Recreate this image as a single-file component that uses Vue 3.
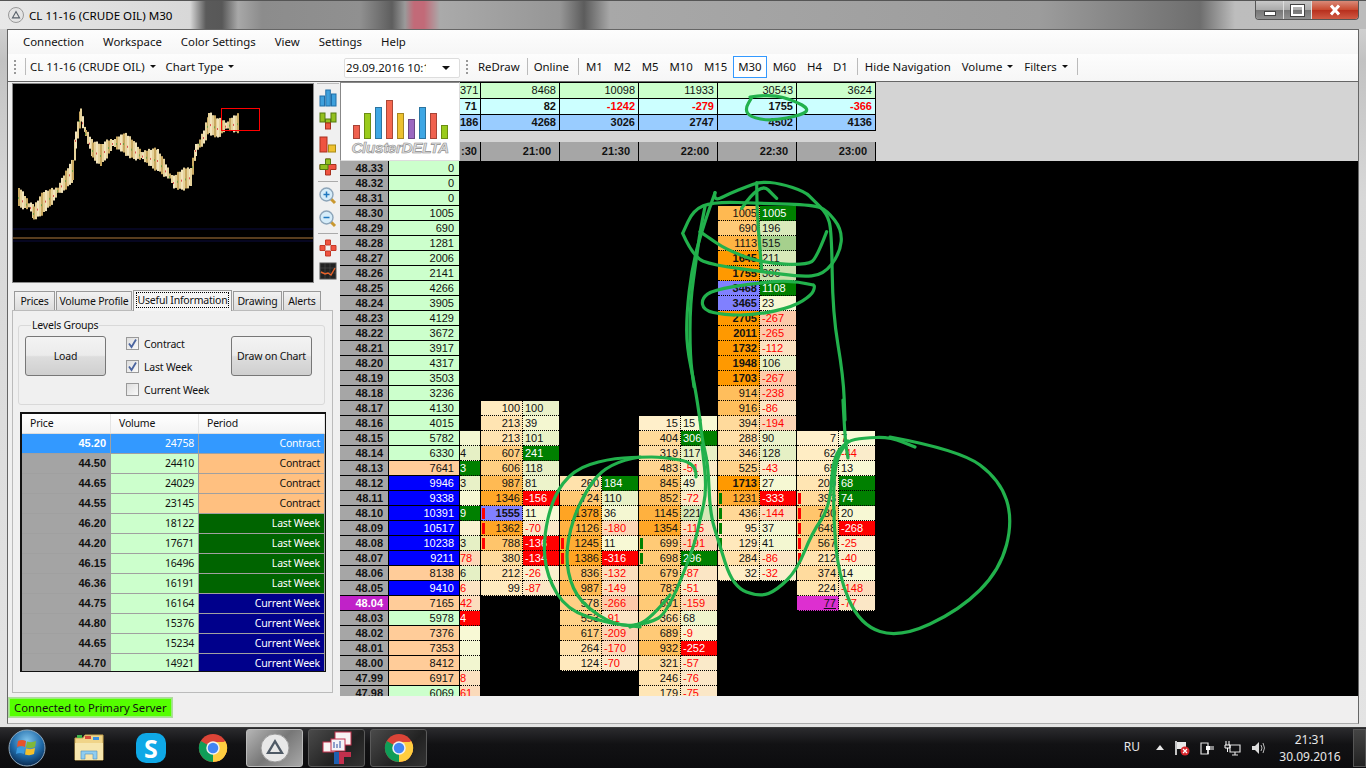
<script setup>
const menus = ['Connection', 'Workspace', 'Color Settings', 'View', 'Settings', 'Help'];
const periods = ['M1', 'M2', 'M5', 'M10', 'M15', 'M30', 'M60', 'H4', 'D1'];
const tabs = [
  { name: 'Prices', width: 41 },
  { name: 'Volume Profile', width: 76 },
  { name: 'Useful Information', width: 99, active: true },
  { name: 'Drawing', width: 49 },
  { name: 'Alerts', width: 38 }
];

const logoBars = [
  { h: 14, c: '#f0614f' }, { h: 26, c: '#9acb1c' }, { h: 32, c: '#3ea7e4' },
  { h: 39, c: '#f5674f' }, { h: 26, c: '#ecc12f' }, { h: 20, c: '#9a68c0' },
  { h: 32, c: '#3ea7e4' }, { h: 26, c: '#f0614f' }, { h: 14, c: '#9acb1c' }
];

const levels = [
  ['45.20', 24758, 'Contract', 'sel'],
  ['44.50', 24410, 'Contract', 'con'],
  ['44.65', 24029, 'Contract', 'con'],
  ['44.55', 23145, 'Contract', 'con'],
  ['46.20', 18122, 'Last Week', 'last'],
  ['44.20', 17671, 'Last Week', 'last'],
  ['46.15', 16496, 'Last Week', 'last'],
  ['46.36', 16191, 'Last Week', 'last'],
  ['44.75', 16164, 'Current Week', 'cur'],
  ['44.80', 15376, 'Current Week', 'cur'],
  ['44.65', 15234, 'Current Week', 'cur'],
  ['44.70', 14921, 'Current Week', 'cur']
];

// left ladder: price, volume, colour kind
const ladder = [
  ['48.33', 0], ['48.32', 0], ['48.31', 0], ['48.30', 1005], ['48.29', 690], ['48.28', 1281],
  ['48.27', 2006], ['48.26', 2141], ['48.25', 4266], ['48.24', 3905], ['48.23', 4129], ['48.22', 3672],
  ['48.21', 3917], ['48.20', 4317], ['48.19', 3503], ['48.18', 3236], ['48.17', 4130], ['48.16', 4015],
  ['48.15', 5782], ['48.14', 6330], ['48.13', 7641, 'o'], ['48.12', 9946, 'b'], ['48.11', 9338, 'b'],
  ['48.10', 10391, 'b'], ['48.09', 10517, 'b'], ['48.08', 10238, 'b'], ['48.07', 9211, 'b'],
  ['48.06', 8138, 'o'], ['48.05', 9410, 'b'], ['48.04', 7165, 'o', true], ['48.03', 5978],
  ['48.02', 7376, 'o'], ['48.01', 7353, 'o'], ['48.00', 8412, 'o'], ['47.99', 6917, 'o'], ['47.98', 6069]
];

// the leftmost column is cut by the ladder: just the slice that shows is kept,
// each entry is delta value (drives the colour), flags, visible text
const partial = {
  stats: ['371', '71', '186'],
  time: ':30',
  start: 18,
  cells: [
    [40, '', ''], [124, '', '4'], [123, 's', '3'], [113, '', '3'], [20, '', ''], [219, 's', '9'], [-5, '', ''], [123, '', '3'],
    [-178, '', '78'], [126, '', '6'], [-96, '', '6'], [-142, '', '42'], [-124, 's', '4'], [12, '', ''], [30, '', ''], [52, '', ''],
    [-118, '', '8'], [-161, '', '61']
  ]
};

// flags: s strong delta, p purple volume, r/g side marker, m magenta close
const columns = [
  {
    time: '21:00', stats: [8468, 82, 4268], start: 16,
    cells: [
      [100, 100], [213, 39], [213, 101], [607, 241, 's'], [606, 118], [987, 81], [1346, -156, 's'],
      [1555, 11, 'pr'], [1362, -70, 'r'], [788, -136, 'sr'], [380, -134, 's'], [212, -26], [99, -87]
    ]
  },
  {
    time: '21:30', stats: [10098, -1242, 3026], start: 21,
    cells: [
      [260, 184, 's'], [724, 110], [1378, 36], [1126, -180], [1245, 11, 'r'], [1386, -316, 'sr'], [836, -132],
      [987, -149], [578, -266], [553, -91], [617, -209], [264, -170], [124, -70]
    ]
  },
  {
    time: '22:00', stats: [11933, -279, 2747], start: 17,
    cells: [
      [15, 15], [404, 306, 's'], [319, 117], [483, -51], [845, 49], [852, -72], [1145, 221], [1354, -115],
      [699, -191, 'g'], [698, 296, 'sg'], [679, -87], [783, -51], [691, -159], [366, 68], [689, -9],
      [932, -252, 's'], [321, -57], [246, -76], [179, -75]
    ]
  },
  {
    time: '22:30', stats: [30543, 1755, 4502], start: 3,
    cells: [
      [1005, 1005, 's'], [690, 196], [1113, 515], [1645, 211], [1755, 306], [3468, 1108, 'ps'], [3465, 23, 'p'],
      [2705, -267], [2011, -265], [1732, -112], [1948, 106], [1703, -267], [914, -238], [916, -86], [394, -194],
      [288, 90], [346, 128], [525, -43], [1713, 27], [1231, -333, 'sg'], [436, -144, 'g'], [95, 37, 'g'],
      [129, 41, 'g'], [284, -86], [32, -32]
    ]
  },
  {
    time: '23:00', stats: [3624, -366, 4136], start: 18,
    cells: [
      [7, 7], [62, -44], [65, 13], [200, 68, 's'], [393, 74, 'sr'], [780, 20, 'r'], [648, -268, 'sr'],
      [567, -25, 'r'], [212, -40, 'r'], [374, 14], [224, -148], [77, -77, 'm']
    ]
  }
];

const mix = (a, b, t) => {
  const k = Math.min(Math.max(t, 0), 1);
  return `rgb(${a.map((v, i) => Math.round(v + (b[i] - v) * k)).join(',')})`;
};

const has = (cell, flag) => (cell[2] || '').includes(flag);
const isBold = (cell) => cell[0] >= 1500;

const volumeBg = (cell) => {
  if (has(cell, 'm')) return '#dd2fd0';
  if (has(cell, 'p')) return '#8080ff';
  if (isBold(cell)) return '#ff9900';
  return mix([255, 240, 204], [255, 163, 32], cell[0] / 1400);
};

const deltaColor = (d, strong) => {
  if (strong) return d < 0 ? '#ff0000' : '#008000';
  if (d >= 0) return mix([250, 250, 215], [165, 208, 140], d / 520);
  return mix([250, 243, 210], [252, 200, 168], -d / 280);
};

// overview chart, built from the outline of the price curve
const outline = [
  [18, 197], [30, 207], [33, 213], [43, 202], [53, 195], [63, 183], [72, 170], [75, 140], [80, 115], [85, 133],
  [92, 150], [100, 155], [112, 143], [123, 143], [140, 155], [157, 160], [167, 173], [173, 182], [190, 177],
  [195, 150], [203, 137], [208, 123], [217, 128], [227, 125], [238, 123]
];
const overview = [];
for (let i = 0; i < outline.length - 1; i++) {
  const [x0, y0] = outline[i];
  const [x1, y1] = outline[i + 1];
  for (let x = x0; x < x1; x += 2) {
    const y = y0 + ((y1 - y0) * (x - x0)) / (x1 - x0);
    const n = overview.length;
    const wave = Math.abs(Math.sin(x / 9));
    const h = 4 + Math.round(wave * 15) + ((n * 7) % 5);
    overview.push({
      x,
      y: y - h / 2,
      h,
      fill: n % 4 === 0 ? '#c9a860' : n % 4 === 2 ? '#f2e4bc' : '#e6d29a',
      dot: n % 2 === 0 ? (n % 4 ? '#d9534f' : '#6fa34a') : null
    });
  }
}

// hand-drawn marker strokes, read off zoomed crops and mapped back to the screen
const mapCrop = (ox, oy, pts) => pts.map(([x, y]) => [ox + x / 3, oy + y / 3]);
const smooth = (pts) => {
  let d = `M${pts[0][0]} ${pts[0][1]}`;
  for (let i = 1; i < pts.length - 1; i++) {
    const mx = (pts[i][0] + pts[i + 1][0]) / 2;
    const my = (pts[i][1] + pts[i + 1][1]) / 2;
    d += ` Q${pts[i][0]} ${pts[i][1]} ${mx} ${my}`;
  }
  const last = pts[pts.length - 1];
  return `${d} L${last[0]} ${last[1]}`;
};
const strokes = [
  [[750, 97], [771, 94], [795, 101], [809, 109], [802, 115], [771, 121], [750, 117], [745, 109], [752, 97]],
  ...[
    [[8, 190], [40, 262], [100, 285], [250, 305], [360, 320], [430, 315], [480, 250], [487, 180], [440, 120], [400, 105], [250, 100], [100, 95], [40, 120], [8, 190]],
    [[440, 185], [410, 265], [380, 285], [250, 280], [140, 240], [75, 195], [60, 185]],
    [[105, 68], [100, 95], [150, 70], [200, 50], [240, 35], [300, 40], [375, 65], [400, 90], [440, 130], [455, 180], [458, 430], [490, 620], [495, 750]],
    [[185, 115], [240, 35], [290, 85]],
    [[230, 38], [230, 110], [240, 240], [245, 300]],
    [[105, 68], [65, 180], [35, 300], [20, 430], [20, 530], [45, 650], [60, 750]],
    [[75, 110], [60, 185], [50, 260], [30, 400], [30, 560], [42, 650]],
    [[400, 345], [340, 330], [220, 340], [100, 360], [65, 385], [70, 420], [130, 435], [230, 435], [340, 410], [395, 375], [405, 350], [400, 345]]
  ].map((p) => mapCrop(680, 170, p)),
  [[700, 420], [702, 440], [708, 463], [710, 513], [718, 540], [733, 587], [760, 597], [777, 590], [797, 570], [812, 533], [830, 507], [833, 457], [847, 441], [863, 438], [890, 437], [915, 447]],
  [[843, 400], [845, 440], [848, 458]],
  [[890, 437], [960, 450], [1000, 480], [1013, 520], [1000, 570], [960, 610], [900, 638], [860, 625], [838, 575], [833, 510], [835, 460], [848, 441]],
  [[696, 477], [697, 463], [663, 457], [640, 457], [607, 459], [573, 470], [553, 497], [543, 540], [547, 577], [567, 610], [607, 623], [640, 627]],
  [[640, 457], [607, 462], [580, 500], [567, 540], [567, 573], [580, 603], [617, 627], [650, 623], [667, 613], [693, 550], [700, 520], [707, 490], [702, 445]],
  [[670, 595], [650, 620], [630, 627]]
].map(smooth);
</script>

<template>
  <div class="desktop">
    <div class="window">
      <header class="titlebar">
        <div class="title-app">
          <svg width="16" height="16" viewBox="0 0 16 16">
            <circle cx="8" cy="8" r="7.5" fill="#e4e4e4" stroke="#999" />
            <path d="M8 3.5 L12.5 11.5 H3.5 Z M8 5.8 L5.4 10.3 H10.6 Z" fill="#58606a" fill-rule="evenodd" />
          </svg>
          <span>CL 11-16 (CRUDE OIL) M30</span>
        </div>
        <div class="title-rest"></div>
        <div class="win-controls">
          <div class="win-btn"><span class="min-glyph"></span></div>
          <div class="win-btn"><span class="max-glyph"></span></div>
          <div class="win-btn close">
            <svg width="14" height="12" viewBox="0 0 14 12"><path d="M3 1.5 L11 10.5 M11 1.5 L3 10.5" stroke="#fff" stroke-width="3" /></svg>
          </div>
        </div>
      </header>

      <div class="client">
        <nav class="menubar">
          <span v-for="m in menus" :key="m">{{ m }}</span>
        </nav>

        <div class="toolbar">
          <div class="tool-left">
            <span class="grip"></span>
            <span class="tool-sep"></span>
            <span class="tool-item first">CL 11-16 (CRUDE OIL)<i class="caret"></i></span>
            <span class="tool-item">Chart Type<i class="caret"></i></span>
          </div>
          <div class="datebox">
            <span class="date-text">29.09.2016 10:1</span>
            <i class="caret big"></i>
          </div>
          <span class="grip second"></span>
          <span class="tool-item">ReDraw</span>
          <span class="tool-sep after-redraw"></span>
          <span class="tool-item">Online</span>
          <span class="tool-sep after-online"></span>
          <span v-for="p in periods" :key="p" class="period" :class="{ on: p === 'M30' }">{{ p }}</span>
          <span class="tool-sep after-periods"></span>
          <span class="tool-item">Hide Navigation</span>
          <span class="tool-item gap">Volume<i class="caret"></i></span>
          <span class="tool-item gap">Filters<i class="caret"></i></span>
          <span class="tool-sep wide"></span>
        </div>

        <div class="workspace">
          <aside class="side">
            <div class="side-top">
              <svg class="overview" viewBox="12 83 302 200" width="302" height="200">
                <rect x="12" y="83" width="302" height="200" fill="#000" />
                <line x1="13" x2="313" y1="229" y2="229" stroke="#0c0c40" />
                <line x1="13" x2="313" y1="238" y2="238" stroke="#b07a3c" />
                <line x1="13" x2="313" y1="241" y2="241" stroke="#0c0c40" />
                <g v-for="(b, i) in overview" :key="i">
                  <rect :x="b.x" :y="b.y" width="2" :height="b.h" :fill="b.fill" />
                  <rect v-if="b.dot" :x="b.x" :y="b.y + b.h / 2" width="1" height="2" :fill="b.dot" />
                </g>
                <rect x="221.5" y="108.5" width="38" height="22" fill="none" stroke="#f00" />
                <rect x="12.5" y="83.5" width="301" height="199" fill="none" stroke="#8a8a8a" />
              </svg>

              <div class="iconstrip">
                <svg width="18" height="18" viewBox="0 0 18 18">
                  <rect x="1" y="7" width="4.5" height="10" fill="#3ea0dc" stroke="#1f6ea8" />
                  <rect x="6.8" y="1" width="4.5" height="16" fill="#3ea0dc" stroke="#1f6ea8" />
                  <rect x="12.5" y="5" width="4.5" height="12" fill="#3ea0dc" stroke="#1f6ea8" />
                </svg>
                <svg width="18" height="18" viewBox="0 0 18 18">
                  <rect x="1" y="1" width="5" height="9" fill="#93c01f" stroke="#557a10" />
                  <rect x="12" y="1" width="5" height="9" fill="#93c01f" stroke="#557a10" />
                  <rect x="6.5" y="7" width="5" height="4" fill="#93c01f" stroke="#557a10" />
                  <rect x="6.5" y="11" width="5" height="6" fill="#ee5a45" stroke="#a8301f" />
                </svg>
                <svg width="18" height="18" viewBox="0 0 18 18">
                  <rect x="1" y="2" width="7" height="15" fill="#ef5340" stroke="#a8301f" />
                  <rect x="9.5" y="10" width="7" height="7" fill="#eec12f" stroke="#a88a15" />
                </svg>
                <svg width="18" height="18" viewBox="0 0 18 18">
                  <path d="M6.5 1 H11.5 V6.5 H17 V11.5 H11.5 V17 H6.5 V11.5 H1 V6.5 H6.5 Z" fill="#ef5340" stroke="#a8301f" />
                  <path d="M1 6.5 H9 V11.5 H1 Z M6.5 1 H11.5 V6.5 H6.5 Z" fill="#93c01f" stroke="#557a10" />
                </svg>
                <span class="strip-sep"></span>
                <svg width="18" height="18" viewBox="0 0 18 18">
                  <line x1="11" y1="11" x2="16" y2="16" stroke="#c9982f" stroke-width="3" />
                  <circle cx="7.5" cy="7.5" r="6.5" fill="#d5ecf9" stroke="#8ca4b8" stroke-width="1.4" />
                  <path d="M4.5 7.5 H10.5 M7.5 4.5 V10.5" stroke="#1f78c0" stroke-width="1.5" />
                </svg>
                <svg width="18" height="18" viewBox="0 0 18 18">
                  <line x1="11" y1="11" x2="16" y2="16" stroke="#c9982f" stroke-width="3" />
                  <circle cx="7.5" cy="7.5" r="6.5" fill="#d5ecf9" stroke="#8ca4b8" stroke-width="1.4" />
                  <path d="M4.5 7.5 H10.5" stroke="#1f78c0" stroke-width="1.5" />
                </svg>
                <span class="strip-sep"></span>
                <svg width="18" height="18" viewBox="0 0 18 18">
                  <path d="M6.5 1 H11.5 V6 H6.5 Z M6.5 12 H11.5 V17 H6.5 Z M1 6.5 H6 V11.5 H1 Z M12 6.5 H17 V11.5 H12 Z" fill="#ef5340" stroke="#c43a28" />
                </svg>
                <svg width="18" height="18" viewBox="0 0 18 18">
                  <rect x="1" y="1" width="16" height="16" fill="#222" stroke="#555" />
                  <path d="M1 6 H17 M1 11 H17 M6 1 V17 M11 1 V17" stroke="#555" stroke-width="0.5" />
                  <path d="M2 10 L6 12 L9 11 L12 13 L16 6" stroke="#e8622a" fill="none" stroke-width="1.4" />
                </svg>
              </div>
            </div>

            <div class="tabs">
              <div v-for="t in tabs" :key="t.name" class="tab" :class="{ active: t.active }" :style="{ width: t.width + 'px' }">
                <span>{{ t.name }}</span>
              </div>
            </div>

            <div class="tabpage">
              <fieldset class="groupbox">
                <legend>Levels Groups</legend>
                <button class="push">Load</button>
                <div class="checks">
                  <label class="check-row"><span class="box"><svg width="11" height="11" viewBox="0 0 11 11"><path d="M2 5.5 L4.5 9 L9 1.5" stroke="#4a649f" stroke-width="1.8" fill="none" /></svg></span>Contract</label>
                  <label class="check-row"><span class="box"><svg width="11" height="11" viewBox="0 0 11 11"><path d="M2 5.5 L4.5 9 L9 1.5" stroke="#4a649f" stroke-width="1.8" fill="none" /></svg></span>Last Week</label>
                  <label class="check-row"><span class="box"></span>Current Week</label>
                </div>
                <button class="push">Draw on Chart</button>
              </fieldset>

              <div class="levels">
                <div class="levels-head">
                  <span>Price</span><span>Volume</span><span>Period</span>
                </div>
                <div v-for="(l, i) in levels" :key="i" class="levels-row" :class="l[3]">
                  <span class="l-price">{{ l[0] }}</span>
                  <span class="l-vol">{{ l[1] }}</span>
                  <span class="l-period">{{ l[2] }}</span>
                </div>
              </div>
            </div>
          </aside>

          <section class="board">
            <div class="frozen">
              <div class="logo">
                <div class="logo-bars">
                  <span v-for="(b, i) in logoBars" :key="i" :style="{ height: b.h + 'px', background: b.c }"></span>
                </div>
                <div class="logo-name">ClusterDELTA</div>
              </div>
              <div v-for="r in ladder" :key="r[0]" class="ladder-row">
                <span class="lad-price" :class="{ last: r[3] }">{{ r[0] }}</span>
                <span class="lad-vol" :class="r[2]">{{ r[1] }}</span>
              </div>
            </div>

            <div class="chart">
              <div class="chart-head">
                <div class="head-col slice">
                  <div class="stat s1">{{ partial.stats[0] }}</div>
                  <div class="stat s2">{{ partial.stats[1] }}</div>
                  <div class="stat s3">{{ partial.stats[2] }}</div>
                  <div class="stat-gap"></div>
                  <div class="stat time">{{ partial.time }}</div>
                </div>
                <div v-for="c in columns" :key="c.time" class="head-col">
                  <div class="stat s1">{{ c.stats[0] }}</div>
                  <div class="stat s2" :class="{ neg: c.stats[1] < 0 }">{{ c.stats[1] }}</div>
                  <div class="stat s3">{{ c.stats[2] }}</div>
                  <div class="stat-gap"></div>
                  <div class="stat time">{{ c.time }}</div>
                </div>
              </div>
              <div class="chart-body">
                <div class="cluster slice" :style="{ marginTop: partial.start * 15 + 'px' }">
                  <div v-for="(cell, i) in partial.cells" :key="i" class="cell">
                    <span
                      class="cell-delta"
                      :class="{ neg: cell[0] < 0, strong: cell[1] === 's' }"
                      :style="{ background: deltaColor(cell[0], cell[1] === 's') }"
                    >{{ cell[2] }}</span>
                  </div>
                </div>
                <div
                  v-for="c in columns"
                  :key="c.time"
                  class="cluster"
                  :style="{ marginTop: c.start * 15 + 'px' }"
                >
                  <div v-for="(cell, i) in c.cells" :key="i" class="cell">
                    <span
                      class="cell-vol"
                      :class="{ bold: isBold(cell), close: has(cell, 'm') }"
                      :style="{ background: volumeBg(cell) }"
                    >
                      <i v-if="has(cell, 'r')" class="mark red"></i>
                      <i v-if="has(cell, 'g')" class="mark green"></i>
                      <span>{{ cell[0] }}</span>
                    </span>
                    <span
                      class="cell-delta"
                      :class="{ neg: cell[1] < 0, strong: has(cell, 's') }"
                      :style="{ background: deltaColor(cell[1], has(cell, 's')) }"
                    >{{ cell[1] }}</span>
                  </div>
                </div>
              </div>
            </div>
          </section>
        </div>

        <footer class="statusbar">
          <span class="connected">Connected to Primary Server</span>
        </footer>
      </div>
    </div>

    <div class="taskbar">
      <svg class="orb" width="40" height="40" viewBox="0 0 40 40">
        <defs>
          <radialGradient id="orbFill" cx="50%" cy="30%" r="70%">
            <stop offset="0" stop-color="#7fc4ec" />
            <stop offset="0.6" stop-color="#1f6aa8" />
            <stop offset="1" stop-color="#0a2a50" />
          </radialGradient>
        </defs>
        <circle cx="20" cy="20" r="18" fill="url(#orbFill)" stroke="#8fa8bc" />
        <path d="M11 13 Q15 11 19 13 L18 19 Q14 17 10 19 Z" fill="#e8532a" />
        <path d="M20 13.5 Q25 15 29 13 L28 19 Q24 21 19 19.5 Z" fill="#7fb83a" />
        <path d="M10 20 Q14 18 18 20 L17 26 Q13 24 9 26 Z" fill="#3b9be0" />
        <path d="M19 20.5 Q24 22 28 20 L27 26 Q23 28 18 26.5 Z" fill="#f5c02a" />
      </svg>

      <div class="pin">
        <svg width="32" height="32" viewBox="0 0 32 32">
          <path d="M2 6 H10 L12 3 H30 V28 H2 Z" fill="#f0d488" stroke="#c9a651" />
          <rect x="4" y="3" width="5" height="3" fill="#3fb44a" />
          <rect x="12" y="4" width="6" height="3" fill="#d84b3a" />
          <rect x="20" y="5" width="6" height="3" fill="#3b8fe0" />
          <path d="M2 11 H30 V28 H2 Z" fill="#f7e6ad" />
          <path d="M8 27 V19 H24 V27 H20 V22 H12 V27 Z" fill="#8fcdf0" stroke="#4a8fc0" stroke-width="0.6" />
        </svg>
      </div>
      <div class="pin">
        <span class="skype">S</span>
      </div>
      <div class="pin">
        <svg width="30" height="30" viewBox="0 0 32 32"><use href="#chromeIcon" /></svg>
      </div>

      <div class="task active">
        <svg width="30" height="30" viewBox="0 0 30 30">
          <circle cx="15" cy="15" r="14" fill="#e8e8e8" stroke="#999" />
          <path d="M15 6 L24 21 H6 Z M15 10.5 L10 19 H20 Z" fill="#4f5a66" fill-rule="evenodd" />
        </svg>
      </div>
      <div class="task">
        <svg width="34" height="34" viewBox="0 0 34 34">
          <rect x="15" y="1" width="16" height="13" fill="#f8f4f4" stroke="#c3304d" />
          <rect x="3" y="11" width="12" height="10" fill="#f8f4f4" stroke="#c3304d" />
          <rect x="11" y="8" width="14" height="12" fill="#f4f4f8" stroke="#c3304d" />
          <path d="M14 11 V17 M17 13 V17 M20 10 V17" stroke="#2a4fa0" />
          <path d="M3 21 H14 V33 H19 V26 H29 V21 H19 V21 H3 Z" fill="#1f5fb0" />
          <path d="M19 21 H31 V26 H24 V33 H19 Z" fill="#c3304d" />
        </svg>
      </div>
      <div class="task">
        <svg width="30" height="30" viewBox="0 0 32 32"><use href="#chromeIcon" /></svg>
      </div>

      <div class="tray">
        <span class="lang">RU</span>
        <svg width="10" height="8" viewBox="0 0 10 8"><path d="M5 1 L9 6 H1 Z" fill="#e8e8e8" /></svg>
        <svg width="16" height="16" viewBox="0 0 16 16">
          <path d="M2 1 V15" stroke="#fff" stroke-width="1.5" />
          <path d="M3 2 H12 V9 H3 Z" fill="#e8e8e8" />
          <circle cx="11" cy="11" r="4.5" fill="#d8262c" />
          <path d="M9 9 L13 13 M13 9 L9 13" stroke="#fff" stroke-width="1.3" />
        </svg>
        <svg width="16" height="16" viewBox="0 0 16 16">
          <path d="M2 3 H9 V14 H2 Z" fill="none" stroke="#ddd" stroke-width="1.2" />
          <path d="M7 6 H11 V10 H7 Z" fill="#fff" />
          <path d="M11 7 H15 M11 9 H15 M9 10 V14" stroke="#fff" stroke-width="1.2" />
        </svg>
        <svg width="18" height="16" viewBox="0 0 18 16">
          <path d="M6 5 H16 V12 H6 Z" fill="none" stroke="#ddd" stroke-width="1.2" />
          <path d="M8 15 H14 M11 12 V15" stroke="#ddd" stroke-width="1.2" />
          <path d="M2 1 V5 M5 1 V5 M1 5 H6 V8 H1 Z M3.5 8 V12" stroke="#fff" fill="none" />
        </svg>
        <svg width="16" height="16" viewBox="0 0 16 16">
          <path d="M1 6 H4 L8 2 V14 L4 10 H1 Z" fill="#ddd" />
          <path d="M10 5 Q12 8 10 11 M12 3 Q15 8 12 13" stroke="#bbb" fill="none" />
        </svg>
        <div class="clock">
          <div>21:31</div>
          <div>30.09.2016</div>
        </div>
        <span class="show-desktop"></span>
      </div>
    </div>

    <svg class="defs" width="0" height="0">
      <symbol id="chromeIcon" viewBox="0 0 32 32">
        <circle cx="16" cy="16" r="15" fill="#db4437" />
        <path d="M16 16 L3 8.5 A15 15 0 0 0 16 31 Z" fill="#0f9d58" />
        <path d="M16 16 L29 8.5 A15 15 0 0 1 16 31 Z" fill="#ffcd40" />
        <path d="M16 9.5 H29 A15 15 0 0 1 22 30 L16 16 Z" fill="#ffcd40" />
        <circle cx="16" cy="16" r="7.2" fill="#f1f1f1" />
        <circle cx="16" cy="16" r="5.6" fill="#4285f4" />
      </symbol>
    </svg>

    <!-- marker strokes drawn on top of the screenshot -->
    <svg class="scribbles" width="1366" height="768" viewBox="0 0 1366 768">
      <path v-for="(d, i) in strokes" :key="i" :d="d" />
    </svg>
  </div>
</template>

<style scoped>
.desktop {
  position: relative;
  width: 1366px;
  height: 768px;
  overflow: hidden;
  display: flex;
  flex-direction: column;
  background: #1a1a1a;
  font-family: "Noto Sans", "Liberation Sans", sans-serif;
  font-size: 11.4px;
  color: #111;
}

.defs {
  position: absolute;
}

.window {
  height: 727px;
  display: flex;
  flex-direction: column;
  padding: 0 7px 3px;
  box-sizing: border-box;
  background: linear-gradient(180deg, #dcdcdc 0, #c2c2c2 60px, #d8d8d8 200px, #e4e4e4 100%);
  border-radius: 6px 6px 0 0;
}

.titlebar {
  height: 29px;
  margin: 0 -7px;
  display: flex;
  align-items: flex-start;
  flex: none;
  background: linear-gradient(90deg, #e8e8e8 0, #d8d8d8 190px, #5a5a5a 206px, #585858 222px, #a8a8a8 238px, #8c8c8c 262px, #909090 360px, #5e5e5e 392px, #9a9a9a 405px, #c26a78 414px, #c26a78 424px, #aaa 440px, #969696 560px, #5c5c5c 584px, #a8a8a8 610px, #9c9c9c 1040px, #6e6e6e 1200px, #bdbdbd 1235px, #bcbcbc 100%);
  border-top: 1px solid #555;
  box-sizing: border-box;
}

.title-app {
  display: flex;
  align-items: center;
  gap: 5px;
  padding: 6px 0 0 8px;
}

.title-app span {
  font-size: 11.6px;
  color: #000;
}

.title-rest {
  flex: 1;
}

.win-controls {
  display: flex;
  margin-right: 7px;
  border: 1px solid #555;
  border-top: 0;
  border-radius: 0 0 4px 4px;
  overflow: hidden;
}

.win-btn {
  width: 27px;
  height: 18px;
  display: flex;
  align-items: center;
  justify-content: center;
  background: linear-gradient(180deg, #c8c8c8 0, #aaa 50%, #777 52%, #909090 100%);
  border-right: 1px solid #ddd;
}

.win-btn.close {
  width: 46px;
  background: linear-gradient(180deg, #d98a78 0, #c8492f 50%, #b8301e 52%, #d05a44 100%);
  border-right: 0;
}

.min-glyph {
  width: 10px;
  height: 3px;
  margin-top: 6px;
  background: #fff;
  border: 1px solid #444;
}

.max-glyph {
  width: 9px;
  height: 7px;
  border: 2px solid #fff;
  outline: 1px solid #444;
}

.client {
  flex: 1;
  min-height: 0;
  display: flex;
  flex-direction: column;
  border: 1px solid #666;
  border-bottom-color: #aaa;
  background: #f0efef;
}

.menubar {
  height: 24px;
  display: flex;
  align-items: center;
  gap: 19px;
  padding: 0 0 2px 15px;
  box-sizing: border-box;
  flex: none;
}

.toolbar {
  height: 28px;
  display: flex;
  align-items: center;
  flex: none;
  padding-bottom: 2px;
  border-bottom: 1px solid #666;
  box-sizing: border-box;
}

.menubar,
.toolbar {
  background: linear-gradient(180deg, #fdfdfd, #f6f6f6);
}

.tool-left {
  width: 336px;
  display: flex;
  align-items: center;
  flex: none;
  padding-left: 6px;
  box-sizing: border-box;
}

.grip {
  width: 2px;
  height: 14px;
  border-left: 2px dotted #999;
}

.grip.second {
  margin: 0 8px 0 6px;
}

.tool-sep {
  width: 1px;
  height: 17px;
  margin-left: 7px;
  background: #bbb;
}

.tool-sep.wide {
  margin: 0 7px 0 9px;
}

.tool-sep.after-redraw {
  margin: 0 6px 0 7px;
}

.tool-sep.after-online {
  margin: 0 2px 0 9px;
}

.tool-sep.after-periods {
  margin: 0 7px 0 3px;
}

.tool-item {
  display: inline-flex;
  align-items: center;
  white-space: nowrap;
}

.tool-item.first {
  margin-left: 4px;
  margin-right: 10px;
}

.tool-item.gap {
  margin-left: 11px;
}

.caret {
  width: 0;
  height: 0;
  margin-left: 5px;
  border: 3px solid transparent;
  border-top-color: #111;
  border-bottom: 0;
}

.caret.big {
  border-width: 4px 4px 0;
}

.datebox {
  width: 116px;
  height: 20px;
  margin-top: 2px;
  display: flex;
  align-items: center;
  flex: none;
  background: #fff;
  border: 1px solid #ddd;
  border-radius: 2px;
  box-sizing: border-box;
}

.date-text {
  width: 80px;
  margin-left: 1px;
  overflow: hidden;
  white-space: nowrap;
}

.datebox .caret {
  margin-left: 16px;
}

.period {
  height: 22px;
  line-height: 20px;
  padding: 0 4px;
  margin-right: 1px;
  border: 1px solid transparent;
  box-sizing: border-box;
}

.period.on {
  border-color: #3399ff;
  background: #fff;
}

.workspace {
  height: 614px;
  display: flex;
  flex: none;
  background: #f0f0f0;
}

.side {
  width: 332px;
  flex: none;
  display: flex;
  flex-direction: column;
  font-size: 10.5px;
  letter-spacing: -0.2px;
}

.side-top {
  display: flex;
  padding: 1px 0 0 4px;
}

.overview {
  display: block;
  flex: none;
}

.iconstrip {
  display: flex;
  flex-direction: column;
  align-items: center;
  width: 22px;
  margin-left: 3px;
  padding-top: 5px;
  gap: 5px;
  border-top: 1px solid #bbb;
  box-sizing: border-box;
  height: 200px;
}

.strip-sep {
  width: 20px;
  height: 1px;
  background: #aaa;
}

.tabs {
  display: flex;
  align-items: flex-end;
  height: 27px;
  padding-left: 6px;
  flex: none;
}

.tab {
  height: 19px;
  margin-right: 1px;
  text-align: center;
  line-height: 18px;
  white-space: nowrap;
  background: linear-gradient(180deg, #f2f2f2, #dcdcdc);
  border: 1px solid #999;
  border-bottom: 0;
  box-sizing: border-box;
}

.tab.active {
  height: 21px;
  background: #f5f5f5;
  position: relative;
  z-index: 1;
  margin-bottom: -1px;
}

.tab.active span {
  border: 1px dotted #000;
  padding: 0 1px;
}

.tabpage {
  margin-left: 4px;
  width: 321px;
  height: 383px;
  border: 1px solid #bbb;
  box-sizing: border-box;
  background: #f0f0f0;
  padding: 7px 7px 0 5px;
}

.groupbox {
  margin: 0;
  height: 87px;
  display: flex;
  gap: 20px;
  padding: 4px 0 0 6px;
  border: 1px solid #d9d9d9;
  border-radius: 3px;
  box-sizing: border-box;
  min-width: 0;
}

.groupbox legend {
  padding: 0 1px;
  margin-left: 6px;
  line-height: 14px;
}

.push {
  width: 81px;
  height: 40px;
  font: inherit;
  letter-spacing: inherit;
  padding: 0;
  color: #111;
  border: 1px solid #777;
  border-radius: 3px;
  background: linear-gradient(180deg, #f3f3f3 0, #ebebeb 48%, #dddddd 52%, #cfcfcf 100%);
}

.checks {
  width: 85px;
  display: flex;
  flex-direction: column;
  gap: 6px;
  margin-top: -1px;
}

.check-row {
  display: flex;
  align-items: center;
  gap: 5px;
  height: 17px;
  white-space: nowrap;
}

.box {
  width: 13px;
  height: 13px;
  flex: none;
  display: flex;
  align-items: center;
  justify-content: center;
  border: 1px solid #999;
  box-sizing: border-box;
  background: linear-gradient(135deg, #ddd, #fafafa);
}

.levels {
  width: 306px;
  height: 260px;
  margin-top: 7px;
  margin-left: 2px;
  overflow: hidden;
  border: 2px solid #111;
  border-right-width: 1px;
  border-bottom-width: 1px;
  box-sizing: border-box;
  background: #a0a0a0;
}

.levels-head,
.levels-row {
  display: grid;
  grid-template-columns: 89px 88px 1fr;
}

.levels-head {
  height: 20px;
  line-height: 19px;
  background: linear-gradient(180deg, #fff, #f4f4f4);
  border-bottom: 1px solid #ddd;
  box-sizing: border-box;
}

.levels-head span {
  padding-left: 8px;
  border-right: 1px solid #e4e4e4;
}

.levels-row {
  height: 20px;
  line-height: 19px;
  text-align: right;
}

.levels-row span {
  padding-right: 4px;
  border-right: 1px solid #a0a0a0;
  border-bottom: 1px solid #a0a0a0;
  box-sizing: border-box;
}

.l-price {
  font: 700 11px/19px "Liberation Sans", sans-serif;
  letter-spacing: 0;
  background: #a4a4a4;
}

.l-vol {
  background: #ccffcc;
}

.levels-row.sel span {
  background: #3399ff;
  color: #fff;
}

.levels-row.con .l-period {
  background: #ffc080;
}

.levels-row.last .l-period {
  background: #006400;
  color: #fff;
}

.levels-row.cur .l-period {
  background: #00008b;
  color: #fff;
}

.board {
  flex: 1;
  min-width: 0;
  display: flex;
  overflow: hidden;
}

.frozen {
  width: 120px;
  flex: none;
  background: #000;
  overflow: hidden;
  border-left: 0;
  font-family: "Liberation Sans", sans-serif;
  font-size: 11px;
}

.logo {
  height: 79px;
  display: flex;
  flex-direction: column;
  align-items: center;
  background: #fff;
  border: 1px solid #888;
  border-right-color: #ddd;
  border-bottom-color: #ddd;
  box-sizing: border-box;
}

.logo-bars {
  height: 56px;
  display: flex;
  align-items: flex-end;
  gap: 4px;
}

.logo-bars span {
  width: 7px;
  border: 1px solid rgba(0, 0, 0, 0.3);
  box-sizing: border-box;
}

.logo-name {
  font: italic 700 15.4px "Liberation Sans", sans-serif;
  letter-spacing: -0.4px;
  color: #e2e2e2;
  -webkit-text-stroke: 0.6px #8c8c8c;
  line-height: 18px;
}

.ladder-row {
  height: 15px;
  display: flex;
  line-height: 14px;
  border-bottom: 1px solid #000;
  box-sizing: border-box;
}

.lad-price {
  width: 49px;
  padding-right: 5px;
  text-align: right;
  font-weight: 700;
  background: #a6a6a6;
  border-right: 1px solid #000;
  box-sizing: border-box;
}

.lad-price.last {
  background: #c022c8;
  color: #fff;
}

.lad-vol {
  width: 70px;
  padding-right: 5px;
  text-align: right;
  background: #ccffcc;
  box-sizing: border-box;
}

.lad-vol.o {
  background: #ffcc99;
}

.lad-vol.b {
  background: #0000ff;
  color: #fff;
}

.chart {
  flex: 1;
  min-width: 0;
  display: flex;
  flex-direction: column;
  overflow: hidden;
  font-family: "Liberation Sans", sans-serif;
  font-size: 11px;
}

.chart-head {
  height: 79px;
  display: flex;
  flex: none;
  background: #d4d4d4;
}

.head-col {
  width: 79px;
  flex: none;
  text-align: right;
  font-weight: 700;
  border-top: 1px solid #000;
  box-sizing: border-box;
}

.head-col.slice {
  width: 21px;
}

.stat {
  height: 16px;
  line-height: 15px;
  padding-right: 3px;
  border-right: 1px solid #000;
  border-bottom: 1px solid #000;
  box-sizing: border-box;
  white-space: nowrap;
}

.stat.s1 {
  background: #ccffcc;
  font-weight: 400;
}

.stat.s2 {
  background: #ccffff;
}

.stat.s2.neg {
  color: #f00;
}

.stat.s3 {
  background: #99ccff;
}

.stat-gap {
  height: 11px;
}

.stat.time {
  height: 19px;
  line-height: 19px;
  padding-right: 8px;
  background: #a6a6a6;
  border-bottom: 0;
}

.slice .stat.time {
  padding-right: 3px;
}

.chart-body {
  flex: 1;
  min-height: 0;
  display: flex;
  align-items: flex-start;
  gap: 1px;
  background: #000;
  overflow: hidden;
}

.cluster {
  width: 78px;
  flex: none;
}

.cluster.slice {
  width: 20px;
}

.cell {
  height: 15px;
  display: flex;
  line-height: 14px;
}

.cell-vol,
.cell-delta {
  position: relative;
  height: 15px;
  border-bottom: 1px dotted #000;
  box-sizing: border-box;
}

.cell-vol {
  width: 42px;
  padding-right: 2px;
  text-align: right;
  border-right: 1px dotted #000;
}

.cell-vol.bold {
  font-weight: 700;
}

.cell-vol.close span {
  text-decoration: underline;
}

.cell-delta {
  width: 36px;
  padding-left: 2px;
  white-space: nowrap;
  overflow: hidden;
}

.slice .cell-delta {
  width: 20px;
  padding-left: 0;
}

.cell-delta.neg {
  color: #f00;
}

.cell-delta.strong {
  color: #fff;
}

.mark {
  position: absolute;
  left: 1px;
  top: 2px;
  width: 3px;
  height: 11px;
}

.mark.red {
  background: #f00;
}

.mark.green {
  background: #008000;
}

.statusbar {
  flex: 1;
  display: flex;
  align-items: flex-start;
  padding: 2px 0 0 1px;
  background: #f0efef;
}

.connected {
  height: 19px;
  line-height: 17px;
  padding: 0 4px;
  background: #55ff00;
  border: 1px solid #99ee77;
  outline: 1px solid #b0d8a0;
  box-sizing: border-box;
  font-size: 11.3px;
}

.taskbar {
  height: 41px;
  flex: none;
  display: flex;
  align-items: center;
  background: linear-gradient(180deg, #2b2b2e 0, #121214 40%, #0c0c0e 100%);
  border-top: 1px solid #3a3a3a;
  box-sizing: border-box;
}

.orb {
  margin: 0 11px 0 7px;
  flex: none;
}

.pin {
  width: 62px;
  height: 40px;
  display: flex;
  align-items: center;
  justify-content: center;
  flex: none;
}

.skype {
  width: 30px;
  height: 30px;
  line-height: 30px;
  text-align: center;
  border-radius: 10px;
  background: #0fa8e6;
  color: #fff;
  font: 700 25px/30px "Open Sans", sans-serif;
}

.task {
  width: 57px;
  height: 38px;
  margin-left: 5px;
  display: flex;
  align-items: center;
  justify-content: center;
  flex: none;
  border: 1px solid #5a5a5a;
  border-radius: 3px;
  box-sizing: border-box;
  background: linear-gradient(135deg, #4a4a4a, #222 60%, #333);
}

.task.active {
  margin-left: 2px;
  background: linear-gradient(135deg, #b5b5b5, #777 50%, #a8a8a8);
  border-color: #bbb;
}

.tray {
  margin-left: auto;
  display: flex;
  align-items: center;
  color: #e8e8e8;
  height: 100%;
  gap: 9px;
}

.lang {
  margin-right: 6px;
  margin-bottom: 4px;
  font-size: 12px;
}

.clock {
  width: 74px;
  margin: 0 -6px 0 -3px;
  text-align: center;
  font-size: 12px;
  line-height: 17px;
}

.show-desktop {
  width: 13px;
  height: 38px;
  margin-left: 3px;
  border: 1px solid #555;
  box-sizing: border-box;
  background: linear-gradient(180deg, #444, #222);
}

.scribbles {
  position: absolute;
  left: 0;
  top: 0;
  pointer-events: none;
}

.scribbles path {
  fill: none;
  stroke: #22b14c;
  stroke-width: 3.2;
  stroke-linejoin: round;
  stroke-linecap: round;
}
</style>
